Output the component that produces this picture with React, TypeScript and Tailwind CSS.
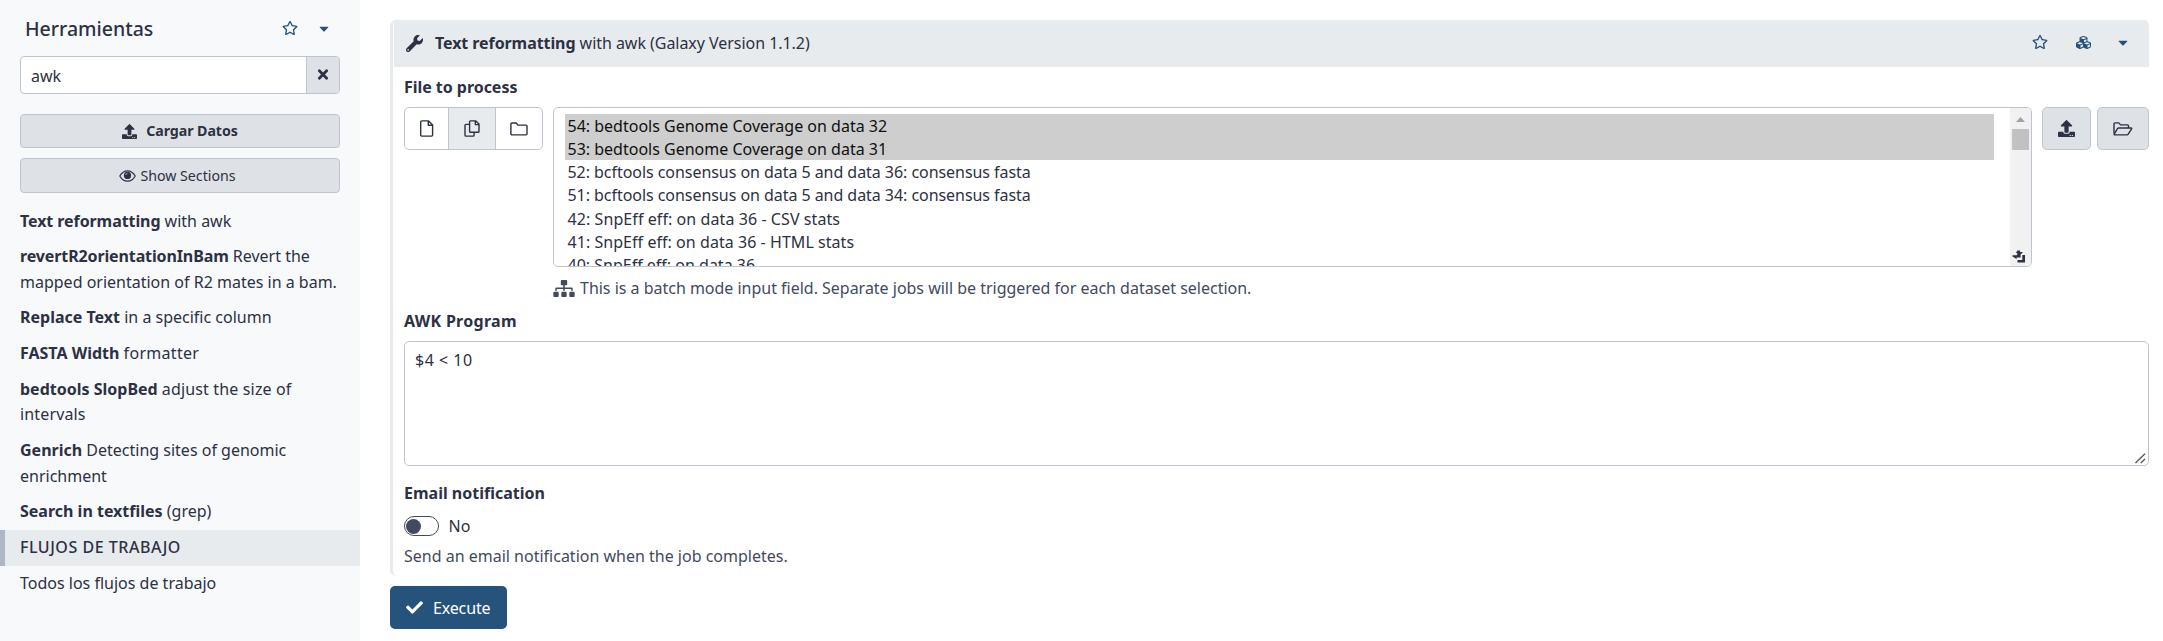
import React from "react";
import { FaWrench, FaUpload, FaCaretDown, FaRegStar, FaTimes, FaCheck, FaSitemap, FaCubes } from "react-icons/fa";

const tools: { name: string; text: string; nameClass?: string; textClass?: string }[] = [
  { name: "Text reformatting", text: "with awk", nameClass: "tracking-[-0.08px]" },
  { name: "revertR2orientationInBam", text: "Revert the mapped orientation of R2 mates in a bam.", nameClass: "tracking-[-0.12px]" },
  { name: "Replace Text", text: "in a specific column" },
  { name: "FASTA Width", text: "formatter", textClass: "tracking-[0.3px]" },
  { name: "bedtools SlopBed", text: "adjust the size of intervals", textClass: "tracking-[0.15px]" },
  { name: "Genrich", text: "Detecting sites of genomic enrichment" },
  { name: "Search in textfiles", text: "(grep)" },
];

const datasets: { label: string; className: string }[] = [
  { label: "54: bedtools Genome Coverage on data 32", className: "bg-[#cecece] text-[#101010]" },
  { label: "53: bedtools Genome Coverage on data 31", className: "bg-[#cecece] text-[#101010]" },
  { label: "52: bcftools consensus on data 5 and data 36: consensus fasta", className: "tracking-[-0.05px]" },
  { label: "51: bcftools consensus on data 5 and data 34: consensus fasta", className: "tracking-[-0.05px]" },
  { label: "42: SnpEff eff: on data 36 - CSV stats", className: "tracking-[0.08px]" },
  { label: "41: SnpEff eff: on data 36 - HTML stats", className: "tracking-[0.05px]" },
  { label: "40: SnpEff eff: on data 36", className: "" },
];

const FileIcon = () => (
  <svg width="14" height="17" viewBox="0 0 14 17" fill="none" stroke="currentColor" strokeWidth="1.4" strokeLinejoin="round">
    <path d="M1.7.9H8.6L12.6 4.9V15.1a1 1 0 0 1-1 1H1.7a1 1 0 0 1-1-1V1.9a1 1 0 0 1 1-1Z" />
    <path d="M8.3 1V5.2H12.5" />
  </svg>
);

const CopyIcon = () => (
  <svg width="16" height="17" viewBox="0 0 16 17" fill="none" stroke="currentColor" strokeWidth="1.4" strokeLinejoin="round">
    <path d="M6.5.9H11.8L15 4.1V11.4a.9.9 0 0 1-.9.9H6.5a.9.9 0 0 1-.9-.9V1.8a.9.9 0 0 1 .9-.9Z" />
    <path d="M11.3 1V4.6H15" />
    <path d="M5.6 4.4H1.9a.9.9 0 0 0-.9.9V15.2a.9.9 0 0 0 .9.9H9.2a.9.9 0 0 0 .9-.9V12.3" />
  </svg>
);

const FolderIcon = () => (
  <svg width="18" height="14" viewBox="0 0 18 14" fill="none" stroke="currentColor" strokeWidth="1.4" strokeLinejoin="round">
    <path d="M2 1H6.2L8 3.1H15.9a1.1 1.1 0 0 1 1.1 1.1V11.8a1.1 1.1 0 0 1-1.1 1.1H2A1.1 1.1 0 0 1 .9 11.8V2.1A1.1 1.1 0 0 1 2 1Z" />
  </svg>
);

const FolderOpenIcon = () => (
  <svg width="20" height="14" viewBox="0 0 20 14" fill="none" stroke="currentColor" strokeWidth="1.4" strokeLinejoin="round">
    <path d="M1 11.5V2A1.1 1.1 0 0 1 2.1.9H5.8L7.6 2.9H14.4a1.1 1.1 0 0 1 1.1 1.1V6" />
    <path d="M5.6 6H18.2a.5.5 0 0 1 .4.8L15.2 12.2a1.6 1.6 0 0 1-1.2.7H1.6a.5.5 0 0 1-.4-.8L4.5 6.6A1.5 1.5 0 0 1 5.6 6Z" />
  </svg>
);

const EyeIcon = () => (
  <svg width="17" height="12" viewBox="0 0 17 12" fill="none">
    <path d="M.8 6C2.5 3 5.3.8 8.5.8S14.5 3 16.2 6C14.5 9 11.7 11.2 8.5 11.2S2.5 9 .8 6Z" stroke="currentColor" strokeWidth="1.2" />
    <circle cx="8.5" cy="5.4" r="3.6" fill="currentColor" />
    <path d="M6.7 5A1.9 1.9 0 0 1 8.5 3.3" stroke="#dee2e6" strokeWidth=".7" />
  </svg>
);

const ResizeIcon = () => (
  <svg width="13" height="13" viewBox="0 0 13 13" fill="currentColor">
    <path d="M5.2.5H8V2H10.5V2.8L8.6 4.6V7.5H4.6V9L.5 6.6V5.3H4.5L5.2 5V3.200L4 2.5V1.8H5.2Z" />
    <path d="M10.3 5H13V12.4H5.5V10H10.3Z" />
  </svg>
);

const iconButton = "flex items-center justify-center rounded-[5px] border border-[#bdc6d0] bg-[#dee2e6] h-[43px]";

function Sidebar() {
  return (
    <aside className="w-[360px] shrink-0 bg-[#f8f9fb] pt-[14px]">
      <div className="flex h-[28px] items-center justify-between pl-[25px] pr-[31px]">
        <h2 className="pt-px text-[19.5px] leading-[28px] font-medium">Herramientas</h2>
        <div className="flex items-center gap-[21px] text-[#25537b]">
          <FaRegStar className="h-[16px] w-[16px]" />
          <FaCaretDown className="h-[15px] w-[10px]" />
        </div>
      </div>
      <div className="mx-5 mt-[14px] flex h-[38px] overflow-hidden rounded-[4px] border border-[#bdc6d0] bg-white">
        <div className="flex-1 pt-px pl-[10px] leading-[37px]">awk</div>
        <div className="flex w-[33px] items-center justify-center border-l border-[#bdc6d0] bg-[#dee2e6] pb-px">
          <FaTimes className="h-[15px] w-[12px]" />
        </div>
      </div>
      <button className="mx-5 mt-5 flex h-[34px] w-[320px] items-center justify-center gap-[9px] rounded-[4px] border border-[#bdc6d0] bg-[#dee2e6] text-[14.2px] font-bold tracking-[-0.05px]">
        <FaUpload className="h-[15px] w-[15px]" />
        Cargar Datos
      </button>
      <button className="mx-5 mt-[10px] flex h-[35px] w-[320px] items-center justify-center gap-1 rounded-[4px] border border-[#bdc6d0] bg-[#dee2e6] pr-[5px] text-[14.2px]">
        <EyeIcon />
        <span>Show Sections</span>
      </button>
      <nav className="mt-[10.5px] leading-[25.5px]">
        {tools.map((t) => (
          <div key={t.name} className="px-5 py-[5.1px]">
            <b className={`font-bold ${t.nameClass ?? ""}`}>{t.name}</b> <span className={t.textClass}>{t.text}</span>
          </div>
        ))}
        <div className="border-l-[5px] border-[#aeb7c4] bg-[#e8ebee] py-[5.1px] pl-[15px] font-medium tracking-[0.52px]">FLUJOS DE TRABAJO</div>
        <div className="px-5 py-[5.1px]">Todos los flujos de trabajo</div>
      </nav>
    </aside>
  );
}

function DatasetSelect() {
  return (
    <div className="flex h-[160px] flex-1 overflow-hidden rounded-[5px] border border-[#bdc6d0]">
      <div className="flex-1 overflow-hidden pt-[6px] pl-[11px] pr-4">
        {datasets.map((d) => (
          <div key={d.label} className={`h-[23.15px] pl-[2.5px] leading-[25px] ${d.className}`}>
            {d.label}
          </div>
        ))}
      </div>
      <div className="flex w-[21px] flex-col items-center bg-[#f1f1f1] pt-[9px] pb-[3px]">
        <svg width="9" height="5" viewBox="0 0 9 5" className="shrink-0">
          <path d="M0 5 4.5 0 9 5Z" fill="#a3a3a3" />
        </svg>
        <div className="mt-[7px] h-[21px] w-[17px] shrink-0 bg-[#c1c1c1]" />
        <div className="mt-auto mr-[4px]">
          <ResizeIcon />
        </div>
      </div>
    </div>
  );
}

function ToolForm() {
  return (
    <main className="flex-1 pt-5 pr-[14px] pl-[30px]">
      <section className="h-[556px] rounded-[6px] border-l-[3px] border-[#e8ebee] pl-px">
        <header className="flex h-[47px] items-center justify-between rounded-tr-[5px] bg-[#e8ebee] pr-[21px] pl-[12px]">
          <div className="flex items-center">
            <FaWrench className="h-[17px] w-[17px]" />
            <div className="ml-3 leading-[25px]">
              <b className="font-bold tracking-[-0.08px]">Text reformatting</b> <span className="tracking-[-0.04px]">with awk (Galaxy Version 1.1.2)</span>
            </div>
          </div>
          <div className="flex items-center pb-[3px] text-[#25537b]">
            <FaRegStar className="h-[16px] w-[16px]" />
            <FaCubes className="ml-[28px] h-[15px] w-[15px]" />
            <FaCaretDown className="ml-[27px] h-[15px] w-[10px]" />
          </div>
        </header>
        <div className="pl-[10px]">
          <div className="pt-[7px] leading-[26px] font-bold tracking-[-0.04px]">File to process</div>
          <div className="mt-[7px] flex">
            <div className="flex h-[43px] w-[139px] overflow-hidden rounded-[5px] border border-[#bdc6d0]">
              <div className="flex w-[43px] items-center justify-center">
                <FileIcon />
              </div>
              <div className="flex w-[48px] items-center justify-center border-x border-[#bdc6d0] bg-[#e8ebee]">
                <CopyIcon />
              </div>
              <div className="flex flex-1 items-center justify-center">
                <FolderIcon />
              </div>
            </div>
            <div className="ml-[10px] flex flex-1">
              <DatasetSelect />
            </div>
            <div className={`${iconButton} ml-[10px] w-[49px]`}>
              <FaUpload className="h-[17px] w-[17px]" />
            </div>
            <div className={`${iconButton} ml-[6px] w-[52px]`}>
              <FolderOpenIcon />
            </div>
          </div>
          <div className="mt-[8px] flex items-center gap-[5px] pl-[149px] leading-[26px] text-[#434a60]">
            <FaSitemap className="h-[17px] w-[22px]" />
            <span className="tracking-[-0.015px]">This is a batch mode input field. Separate jobs will be triggered for each dataset selection.</span>
          </div>
          <div className="mt-[7px] leading-[26px] font-bold tracking-[0.3px]">AWK Program</div>
          <div className="relative mt-[7px]">
            <textarea
              readOnly
              value="$4 < 10"
              className="block h-[125px] w-full resize-none rounded-[5px] border border-[#bdc6d0] px-[10px] py-[6px] leading-[25px] tracking-[0.5px] outline-none"
            />
            <svg width="11" height="11" viewBox="0 0 11 11" className="absolute right-[3px] bottom-[2px]" stroke="#5a5a5a" strokeWidth="1.4">
              <path d="M.5 10 10 .8M5.800 10 10 6" />
            </svg>
          </div>
          <div className="mt-[14px] leading-[26px] font-bold">Email notification</div>
          <div className="mt-[7px] flex h-[26px] items-center">
            <div className="flex h-5 w-[35px] items-center rounded-full border border-[#434a60] pl-px">
              <div className="h-[15px] w-[15px] rounded-full bg-[#434a60]" />
            </div>
            <span className="ml-[9.5px]">No</span>
          </div>
          <div className="mt-1 leading-[26px] text-[#434a60]">Send an email notification when the job completes.</div>
        </div>
      </section>
      <button className="mt-[10px] flex h-[43px] w-[117px] items-center rounded-[5px] bg-[#25537b] pl-4 text-white">
        <FaCheck className="h-[17px] w-[17px]" />
        <span className="ml-[10px] tracking-[-0.15px]">Execute</span>
      </button>
    </main>
  );
}

export default function App() {
  return (
    <div className="flex h-[641px] w-full overflow-hidden bg-white font-['Noto_Sans','Open_Sans',sans-serif] text-[16px] text-[#2c3143]">
      <Sidebar />
      <ToolForm />
    </div>
  );
}
